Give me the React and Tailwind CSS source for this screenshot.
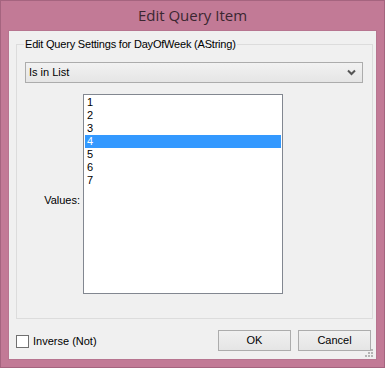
export default function App() {
  const values = ["1", "2", "3", "4", "5", "6", "7"];
  const selected = "4";

  return (
    <div className="w-[385px] h-[368px] bg-[#c27a96] border border-[#a5647f] flex flex-col font-['Liberation_Sans',Arial,sans-serif] text-[11px] text-black">
      <div className="h-[29px] flex items-center justify-center text-[15px] text-[#3b2731] font-['Open_Sans',sans-serif]">
        Edit Query Item
      </div>

      <div className="relative mx-[7px] h-[330px] bg-[#f0f0f0] border border-[#b77590] flex flex-col">
        <div className="relative mt-[13px] ml-[7px] mr-[3px] h-[275px] border border-[#dcdcdc]">
          <span className="absolute -top-[8px] left-[7px] px-[1px] bg-[#f0f0f0] leading-[14px] tracking-[-0.2px]">
            Edit Query Settings for DayOfWeek (AString)
          </span>

          <div className="mt-[17px] ml-[8px] mr-[9px] h-[21px] border border-[#acacac] bg-gradient-to-b from-[#f2f2f2] to-[#e5e5e5] flex items-center justify-between pl-[3px] pr-[6px]">
            <span>Is in List</span>
            <svg width="9" height="7" viewBox="0 0 9 7">
              <path d="M1 1.5 L4.5 5 L8 1.5" fill="none" stroke="#555" strokeWidth="2" />
            </svg>
          </div>

          <div className="flex mt-[11px] ml-[26px]">
            <div className="w-[40px] flex items-center justify-end pr-[3px] pt-[12px]">Values:</div>
            <div className="w-[200px] h-[200px] bg-white border border-[#828790] px-[1px] pt-[1px]">
              {values.map((v) => (
                <div
                  key={v}
                  className={
                    v === selected
                      ? "h-[13px] leading-[13px] pl-[2px] bg-[#3399ff] text-white"
                      : "h-[13px] leading-[13px] pl-[2px]"
                  }
                >
                  {v}
                </div>
              ))}
            </div>
          </div>
        </div>

        <div className="flex items-center mt-[11px] ml-[7px] mr-[5px]">
          <div className="flex items-center gap-[4px] mt-[2px]">
            <div className="w-[13px] h-[13px] border border-[#707070] bg-white" />
            <span>Inverse (Not)</span>
          </div>
          <div className="ml-auto flex gap-[7px]">
            <button className="w-[73px] h-[21px] border border-[#acacac] bg-gradient-to-b from-[#f0f0f0] to-[#e5e5e5] text-[11px]">
              OK
            </button>
            <button className="w-[73px] h-[21px] border border-[#acacac] bg-gradient-to-b from-[#f0f0f0] to-[#e5e5e5] text-[11px]">
              Cancel
            </button>
          </div>
        </div>

        <svg className="absolute right-[2px] bottom-[1px]" width="10" height="10" viewBox="0 0 10 10">
          <rect x="7" y="1" width="2" height="2" fill="#b4b4b4" />
          <rect x="4" y="4" width="2" height="2" fill="#b4b4b4" />
          <rect x="7" y="4" width="2" height="2" fill="#b4b4b4" />
          <rect x="1" y="7" width="2" height="2" fill="#b4b4b4" />
          <rect x="4" y="7" width="2" height="2" fill="#b4b4b4" />
          <rect x="7" y="7" width="2" height="2" fill="#b4b4b4" />
        </svg>
      </div>
    </div>
  );
}
